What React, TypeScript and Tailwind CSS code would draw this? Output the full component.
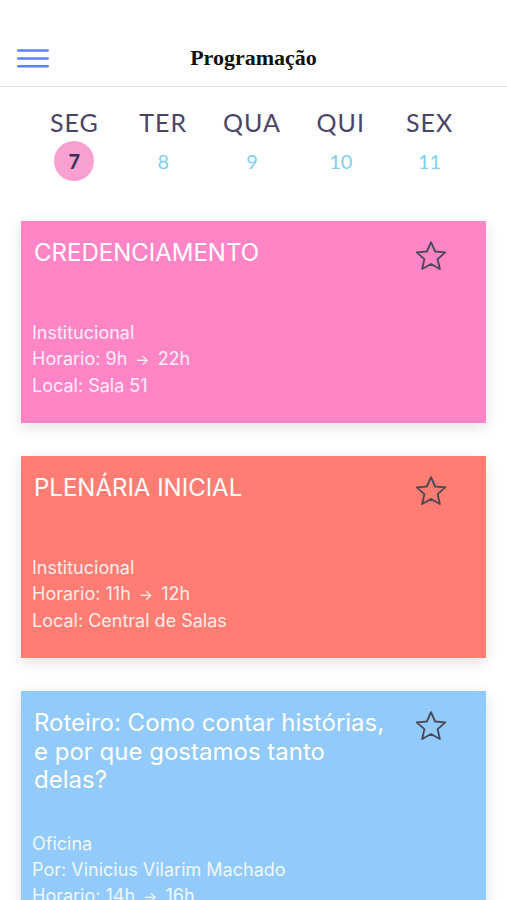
import React from "react";

type Session = {
  title: string;
  color: string;
  lines: React.ReactNode[];
};

const DAYS = [
  { label: "SEG", num: "7", active: true },
  { label: "TER", num: "8" },
  { label: "QUA", num: "9" },
  { label: "QUI", num: "10" },
  { label: "SEX", num: "11" },
];

const Arrow = () => <span className="mx-[8px] text-[15px]">→</span>;

const SESSIONS: Session[] = [
  {
    title: "CREDENCIAMENTO",
    color: "bg-[#ff85c6]",
    lines: [
      "Institucional",
      <>Horario: 9h<Arrow />22h</>,
      "Local: Sala 51",
    ],
  },
  {
    title: "PLENÁRIA INICIAL",
    color: "bg-[#ff7d73]",
    lines: [
      "Institucional",
      <>Horario: 11h<Arrow />12h</>,
      "Local: Central de Salas",
    ],
  },
  {
    title: "Roteiro: Como contar histórias, e por que gostamos tanto delas?",
    color: "bg-[#92cafb]",
    lines: [
      "Oficina",
      "Por: Vinicius Vilarim Machado",
      <>Horario: 14h<Arrow />16h</>,
    ],
  },
];

function Star() {
  return (
    <svg viewBox="0 0 24 24" className="h-9 w-9 shrink-0" fill="none" stroke="#4a4a55" strokeWidth="1.25" strokeLinejoin="round">
      <path d="M12 2.8l2.75 6.2 6.75.6-5.1 4.5 1.5 6.6L12 17.3l-5.9 3.4 1.5-6.6-5.1-4.5 6.75-.6z" />
    </svg>
  );
}

function Card({ s }: { s: Session }) {
  return (
    <div className={`${s.color} mx-[21px] pt-[18px] pb-[24px] shadow-[0_4px_14px_rgba(0,0,0,0.12)]`}>
      <div className="flex items-start">
        <div className="min-h-[45px] flex-1 pl-[13px] pr-[20px] text-[24px] leading-[28.5px] text-white">
          {s.title}
        </div>
        <div className="mr-[37px] -mt-[1px]">
          <Star />
        </div>
      </div>
      <div className="mt-[36px] pl-[11px] text-[18px] leading-[26px] text-white/85">
        {s.lines.map((l, i) => (
          <div key={i}>{l}</div>
        ))}
      </div>
    </div>
  );
}

export default function App() {
  return (
    <div className="h-[900px] overflow-hidden bg-white font-['Inter',sans-serif]">
      <header className="flex h-[87px] items-end border-b border-[#e2e2e4] pb-[13px]">
        <div className="relative flex h-[32px] w-full items-center justify-center">
          <button className="absolute left-[17px] top-[8px]" aria-label="menu">
            <svg width="32" height="19" viewBox="0 0 32 19">
              <g stroke="#5c82f1" strokeWidth="2.6" strokeLinecap="round">
                <line x1="1.3" y1="1.5" x2="30.7" y2="1.5" />
                <line x1="1.3" y1="9.5" x2="30.7" y2="9.5" />
                <line x1="1.3" y1="17.3" x2="30.7" y2="17.3" />
              </g>
            </svg>
          </button>
          <h1 className="font-['Liberation_Serif',serif] text-[22px] font-bold text-[#111]">
            Programação
          </h1>
        </div>
      </header>

      <div className="grid grid-cols-5 pl-[30px] pr-[33px] pt-[20px] pb-[40px]">
        {DAYS.map((d) => (
          <div key={d.label} className="flex flex-col items-center">
            <span className="font-['Lato',sans-serif] text-[25px] leading-[30px] tracking-[1px] text-[#4a4468]">
              {d.label}
            </span>
            <span
              className={`mt-[4px] flex h-[40px] w-[40px] items-center justify-center rounded-full font-['Lato',sans-serif] text-[20px] ${
                d.active ? "bg-[#f8a1d1] font-bold text-[#3e2c5c]" : "text-[#80cff2]"
              }`}
            >
              {d.num}
            </span>
          </div>
        ))}
      </div>

      <div className="flex flex-col gap-[33px]">
        {SESSIONS.map((s) => (
          <Card key={s.title} s={s} />
        ))}
      </div>
    </div>
  );
}
